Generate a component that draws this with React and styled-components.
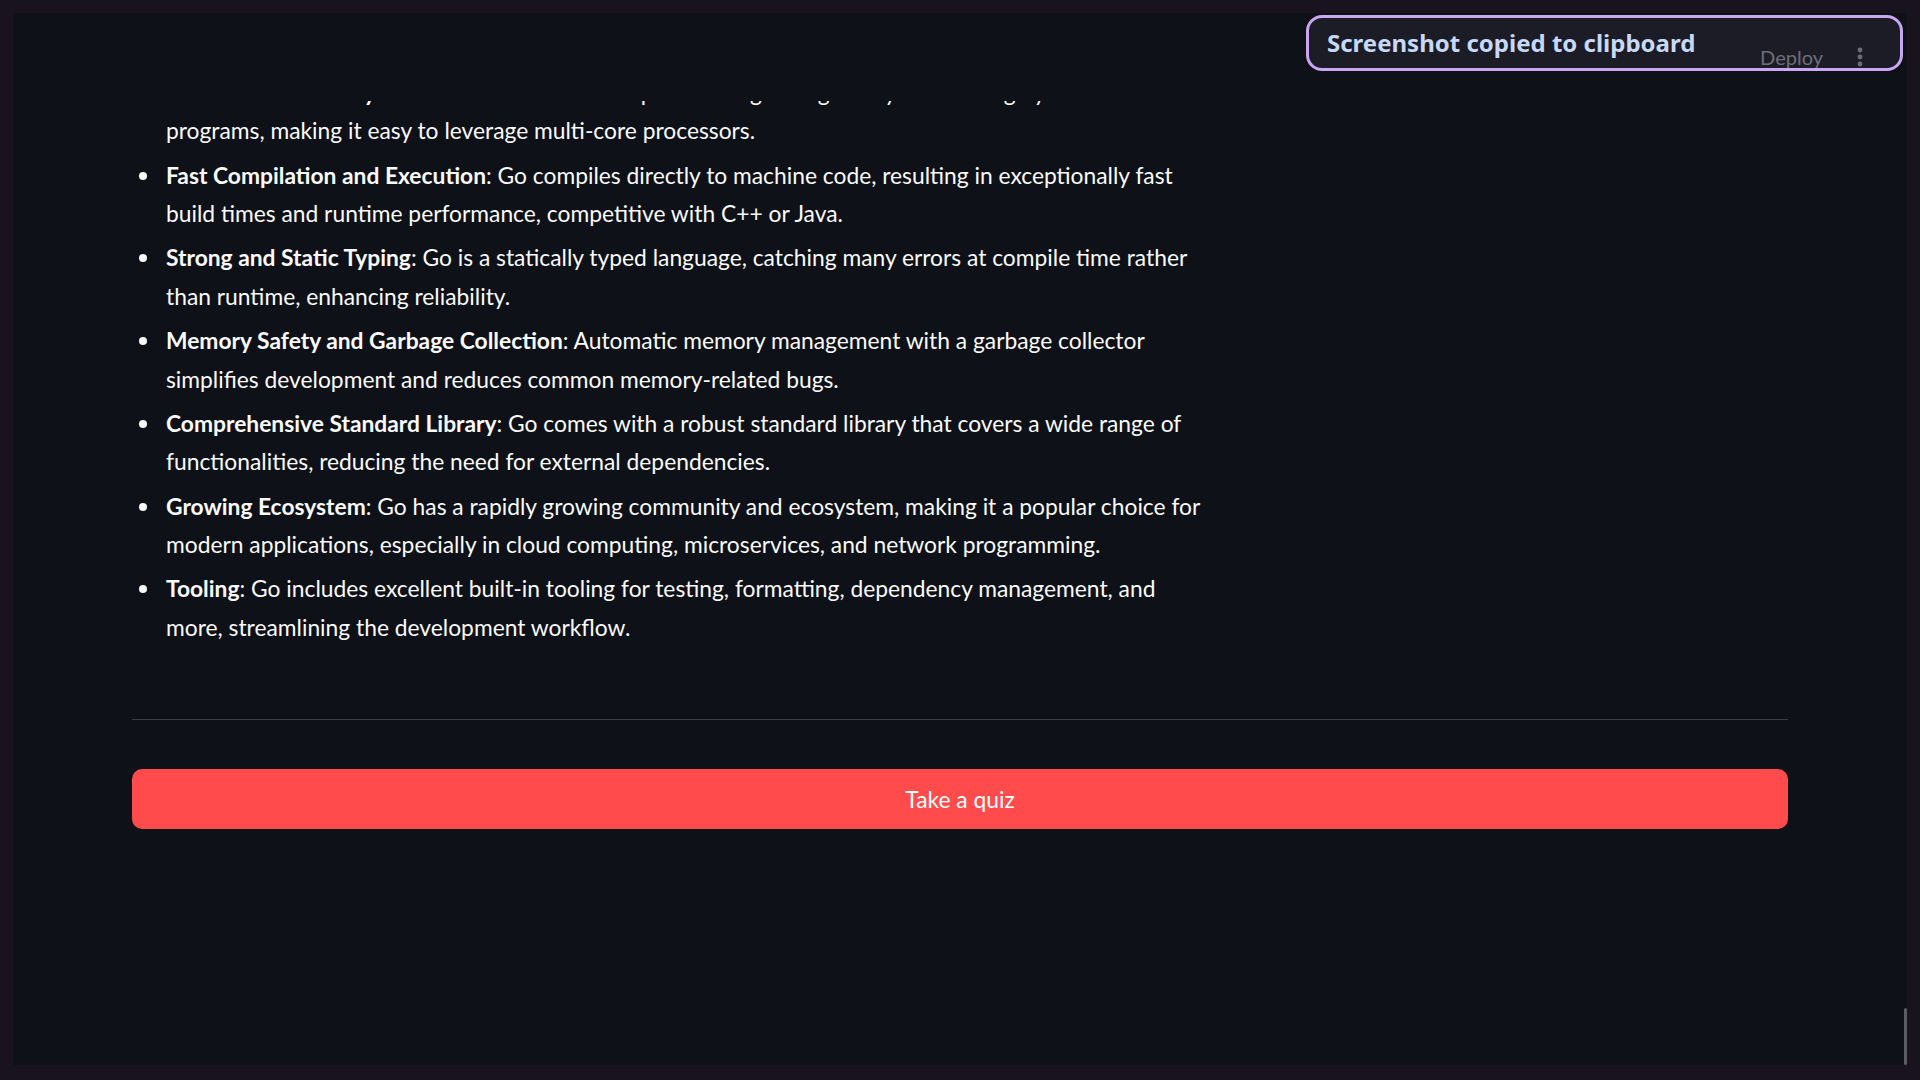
import React from 'react';
import styled, { createGlobalStyle } from 'styled-components';

const GlobalStyle = createGlobalStyle`
  html, body {
    margin: 0;
    padding: 0;
    background: #18131e;
  }
  #root {
    width: 1920px;
    height: 1080px;
  }
`;

const features = [
  {
    title: 'Built-in Concurrency',
    text: 'Goroutines and channels provide a lightweight way to write highly concurrent programs, making it easy to leverage multi-core processors.',
  },
  {
    title: 'Fast Compilation and Execution',
    text: 'Go compiles directly to machine code, resulting in exceptionally fast build times and runtime performance, competitive with C++ or Java.',
  },
  {
    title: 'Strong and Static Typing',
    text: 'Go is a statically typed language, catching many errors at compile time rather than runtime, enhancing reliability.',
  },
  {
    title: 'Memory Safety and Garbage Collection',
    text: 'Automatic memory management with a garbage collector simplifies development and reduces common memory-related bugs.',
  },
  {
    title: 'Comprehensive Standard Library',
    text: 'Go comes with a robust standard library that covers a wide range of functionalities, reducing the need for external dependencies.',
  },
  {
    title: 'Growing Ecosystem',
    text: 'Go has a rapidly growing community and ecosystem, making it a popular choice for modern applications, especially in cloud computing, microservices, and network programming.',
  },
  {
    title: 'Tooling',
    text: 'Go includes excellent built-in tooling for testing, formatting, dependency management, and more, streamlining the development workflow.',
  },
];

const App = () => {
  return (
    <>
      <GlobalStyle />
      <Frame>
        <Screen>
          <Header>
            <DeployButton>Deploy</DeployButton>
            <MenuButton>
              <svg width='6' height='20' viewBox='0 0 6 20'>
                <circle cx='3' cy='3' r='2.4' fill='#c1c1cc' />
                <circle cx='3' cy='10' r='2.4' fill='#c1c1cc' />
                <circle cx='3' cy='17' r='2.4' fill='#c1c1cc' />
              </svg>
            </MenuButton>
          </Header>
          <Main>
            <TextColumn>
              <FeatureList>
                {features.map((f) => (
                  <FeatureItem key={f.title}>
                    <strong>{f.title}</strong>: {f.text}
                  </FeatureItem>
                ))}
              </FeatureList>
            </TextColumn>
            <Divider />
            <QuizButton>Take a quiz</QuizButton>
          </Main>
          <ScrollThumb />
        </Screen>
        <Toast>Screenshot copied to clipboard</Toast>
      </Frame>
    </>
  );
};

const Frame = styled.div`
  position: relative;
  width: 1920px;
  height: 1080px;
  padding: 13px 13px 15px 13px;
  box-sizing: border-box;
  background: #18131e;
`;

const Screen = styled.div`
  position: relative;
  height: 100%;
  background: #0e1117;
  overflow: hidden;
  font-family: Lato, 'Noto Sans', sans-serif;
  color: #fafafa;
`;

const Header = styled.header`
  position: absolute;
  top: 0;
  left: 0;
  right: 0;
  height: 88px;
  background: #0e1117;
  display: flex;
  align-items: center;
  justify-content: flex-end;
  padding-right: 44px;
  gap: 34px;
  z-index: 2;
`;

const DeployButton = styled.span`
  font-size: 20px;
  color: #c1c1cc;
`;

const MenuButton = styled.span`
  display: flex;
  align-items: center;
`;

const Main = styled.main`
  padding: 0 119px;
  margin-top: 60px;
`;

const TextColumn = styled.div`
  width: 1078px;
`;

const FeatureList = styled.ul`
  margin: 0;
  padding-left: 30px;
  font-size: 22.8px;
  line-height: 38.4px;

  strong {
    font-weight: 700;
  }
`;

const FeatureItem = styled.li`
  padding-left: 4px;
  margin-bottom: 5.9px;
  &::marker {
    font-size: 24px;
  }
`;

const Divider = styled.hr`
  margin: 73px 0 0;
  border: none;
  height: 1px;
  background: #3b3d43;
`;

const QuizButton = styled.button`
  display: block;
  width: 100%;
  height: 60px;
  margin-top: 49px;
  border: none;
  border-radius: 10px;
  background: #ff4b4b;
  color: #ffffff;
  font-family: Lato, 'Noto Sans', sans-serif;
  font-size: 22.8px;
`;

const ScrollThumb = styled.div`
  position: absolute;
  right: 0;
  bottom: 0;
  width: 3px;
  height: 57px;
  border-radius: 2px;
  background: #5c5d64;
`;

const Toast = styled.div`
  position: absolute;
  top: 15px;
  left: 1306px;
  width: 597px;
  height: 56px;
  box-sizing: border-box;
  border: 3px solid #c9a6f1;
  border-radius: 16px;
  background: rgba(38, 38, 50, 0.55);
  display: flex;
  align-items: center;
  padding: 0 18px 2px;
  font-family: 'Noto Sans', 'Open Sans', sans-serif;
  font-weight: 700;
  font-size: 24px;
  color: #c7d9f7;
  z-index: 5;
`;

export default App;
